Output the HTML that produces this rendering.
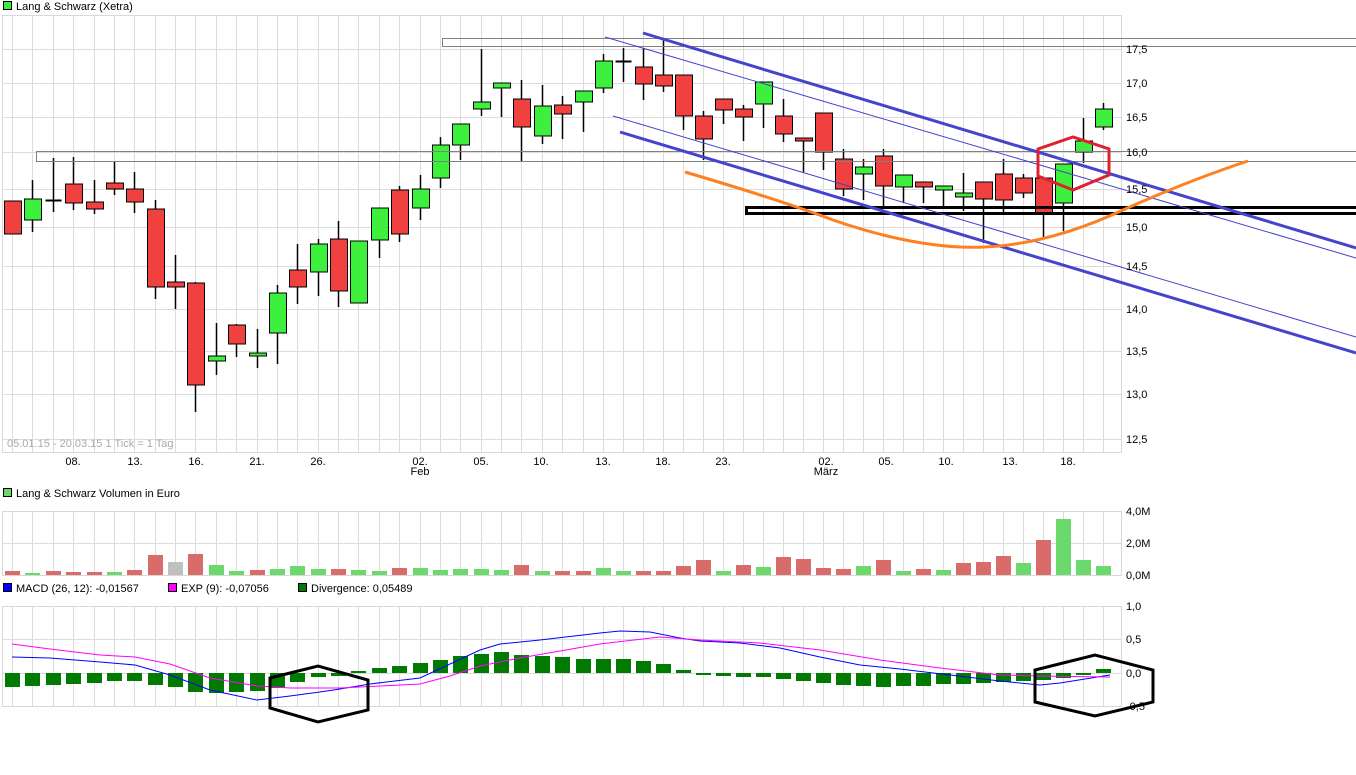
<!DOCTYPE html>
<html><head><meta charset="utf-8"><style>
html,body{margin:0;padding:0;background:#fff;width:1356px;height:775px;overflow:hidden}
svg{display:block}
text{font-family:"Liberation Sans",sans-serif;font-size:11px;fill:#000}
</style></head><body>
<svg id="s" width="1356" height="775" xmlns="http://www.w3.org/2000/svg">
<g id="grid"></g>
<g id="over"></g>
<g id="cand"></g>
<g id="top"></g>
<!-- headers -->
<rect x="3.5" y="1.5" width="8" height="8" fill="#3ef03e" stroke="#000"/>
<text x="16" y="10">Lang &amp; Schwarz (Xetra)</text>
<rect x="3.5" y="488.5" width="8" height="8" fill="#6bd96b" stroke="#000"/>
<text x="16" y="497">Lang &amp; Schwarz Volumen in Euro</text>
<rect x="3.5" y="583.5" width="8" height="8" fill="#0000ff" stroke="#000"/>
<text x="16" y="592">MACD (26, 12): -0,01567</text>
<rect x="168.5" y="583.5" width="8" height="8" fill="#ff00ff" stroke="#000"/>
<text x="181" y="592">EXP (9): -0,07056</text>
<rect x="298.5" y="583.5" width="8" height="8" fill="#007a00" stroke="#000"/>
<text x="311" y="592">Divergence: 0,05489</text>
<text x="7" y="447" style="fill:#aaa">05.01.15 - 20.03.15   1 Tick = 1 Tag</text>
<g id="ylab">
<text x="1126" y="53">17,5</text><text x="1126" y="87">17,0</text><text x="1126" y="121">16,5</text>
<text x="1126" y="156">16,0</text><text x="1126" y="193">15,5</text><text x="1126" y="231">15,0</text>
<text x="1126" y="270">14,5</text><text x="1126" y="313">14,0</text><text x="1126" y="355">13,5</text>
<text x="1126" y="398">13,0</text><text x="1126" y="443">12,5</text>
<text x="1126" y="515">4,0M</text><text x="1126" y="547">2,0M</text><text x="1126" y="579">0,0M</text>
<text x="1126" y="610">1,0</text><text x="1126" y="643">0,5</text><text x="1126" y="677">0,0</text><text x="1126" y="710">-0,5</text>
</g>
<g text-anchor="middle">
<text x="73" y="465">08.</text><text x="135" y="465">13.</text><text x="196" y="465">16.</text>
<text x="257" y="465">21.</text><text x="318" y="465">26.</text><text x="420" y="465">02.</text>
<text x="420" y="475">Feb</text><text x="481" y="465">05.</text><text x="541" y="465">10.</text>
<text x="603" y="465">13.</text><text x="663" y="465">18.</text><text x="723" y="465">23.</text>
<text x="826" y="465">02.</text><text x="826" y="475">März</text><text x="886" y="465">05.</text>
<text x="946" y="465">10.</text><text x="1010" y="465">13.</text><text x="1068" y="465">18.</text>
</g>
<rect x="0" y="476" width="1125" height="10" fill="#fff"/>
</svg>
<script>
var NS="http://www.w3.org/2000/svg";
function el(p,t,a){var e=document.createElementNS(NS,t);for(var k in a)e.setAttribute(k,a[k]);document.getElementById(p).appendChild(e);return e;}
function X(i){return i<=29?12+i*591/29:603+20*(i-29);}
var G="grid";
[[15,452],[511,575],[606,706]].forEach(function(r){
 el(G,"rect",{x:2.5,y:r[0]+.5,width:1119,height:r[1]-r[0],fill:"#fff",stroke:"#d8d8d8"});
 for(var i=0;i<55;i++){var x=Math.round(X(i))+.5;el(G,"line",{x1:x,y1:r[0],x2:x,y2:r[1],stroke:"#dcdcdc"});}
});
[49,83,117,152,189,227,266,309,351,394,439].forEach(function(y){el(G,"line",{x1:2,y1:y+.5,x2:1121,y2:y+.5,stroke:"#dcdcdc"});});
[543].forEach(function(y){el(G,"line",{x1:2,y1:y+.5,x2:1121,y2:y+.5,stroke:"#dcdcdc"});});
[639,673].forEach(function(y){el(G,"line",{x1:2,y1:y+.5,x2:1121,y2:y+.5,stroke:"#dcdcdc"});});
var C=[[201,234,201,234,'r'],[199,220,180,232,'g'],[200,201,158,212,'d'],[184,203,157,210,'r'],[202,209,180,214,'r'],
[183,189,161,195,'r'],[189,202,172,213,'r'],[209,287,200,299,'r'],[282,287,255,309,'r'],[283,385,282,412,'r'],
[356,361,323,375,'g'],[325,344,324,357,'r'],[353,356,329,368,'g'],[293,333,285,364,'g'],[270,287,244,304,'r'],
[244,272,239,296,'g'],[239,291,221,307,'r'],[241,303,241,303,'g'],[208,240,208,258,'g'],[190,234,186,242,'r'],
[189,208,175,220,'g'],[145,178,137,188,'g'],[124,145,124,160,'g'],[102,109,49,116,'g'],[83,88,83,117,'g'],
[99,127,80,161,'r'],[106,136,85,144,'g'],[105,114,96,139,'r'],[91,102,91,132,'g'],[61,88,54,93,'g'],
[61,62,48,82,'d'],[67,84,48,100,'r'],[75,86,40,92,'r'],[75,116,75,130,'r'],[116,139,111,160,'r'],
[99,110,99,124,'r'],[109,117,105,141,'r'],[82,104,82,128,'g'],[116,134,99,142,'r'],[138,141,138,172,'r'],
[113,152,113,170,'r'],[159,189,149,196,'r'],[167,174,159,200,'g'],[156,186,149,208,'r'],[175,187,175,203,'g'],
[182,187,182,203,'r'],[186,190,186,207,'g'],[193,197,173,211,'g'],[182,199,182,243,'r'],[174,200,159,213,'r'],
[178,193,174,198,'r'],[178,213,178,237,'r'],[164,203,164,231,'g'],[141,152,118,163,'g'],[109,127,103,130,'g']];
C.forEach(function(c,i){var x=Math.round(X(i))+.5;
 el("cand","line",{x1:x,y1:c[2],x2:x,y2:c[3],stroke:"#000","stroke-width":1.5});
 if(c[4]=='d'){el("cand","line",{x1:x-8,y1:c[0]+.5,x2:x+8,y2:c[0]+.5,stroke:"#000","stroke-width":2});}
 else el("cand","rect",{x:x-8,y:c[0],width:17,height:c[1]-c[0],fill:c[4]=='r'?"#f04040":"#3ef03e",stroke:"#000","stroke-width":1});
});
var V=[[571,'r'],[573,'g'],[571,'r'],[572,'r'],[572,'r'],[572,'g'],[570,'r'],[555,'r'],[562,'x'],[554,'r'],
[565,'g'],[571,'g'],[570,'r'],[569,'g'],[566,'g'],[569,'g'],[569,'r'],[570,'g'],[571,'g'],[568,'r'],
[568,'g'],[570,'g'],[569,'g'],[569,'g'],[570,'g'],[565,'r'],[571,'g'],[571,'r'],[571,'r'],[568,'g'],
[571,'g'],[571,'r'],[571,'r'],[566,'r'],[560,'r'],[571,'g'],[565,'r'],[567,'g'],[557,'r'],[559,'r'],
[568,'r'],[569,'r'],[566,'g'],[560,'r'],[571,'g'],[569,'r'],[570,'g'],[563,'r'],[562,'r'],[556,'r'],
[563,'g'],[540,'r'],[519,'g'],[560,'g'],[566,'g']];
V.forEach(function(v,i){var x=Math.round(X(i));el("cand","rect",{x:x-7,y:v[0],width:15,height:575-v[0],fill:v[1]=='r'?"#d96b6b":v[1]=='g'?"#6bd96b":"#c0c0c0"});});
var D=[687,686,685,684,683,681,681,685,687,692,693,692,691,688,682,677,676,671,668,666,663,660,656,654,652,655,656,657,659,659,659,661,664,670,675,676,677,677,679,681,683,685,686,687,686,686,684,684,683,682,681,680,678,675,669];
D.forEach(function(d,i){var x=Math.round(X(i));var y1=Math.min(d,673),y2=Math.max(d,673);el("cand","rect",{x:x-7,y:y1,width:15,height:Math.max(y2-y1,2),fill:"#007a00"});});
el("cand","polyline",{points:"12,657 50,658 100,662 135,665 170,675 210,690 257,700 290,696 320,692 340,689 370,684 420,678 450,664 480,650 500,644 540,640 600,633 620,631 650,632 680,638 700,641 740,643 780,648 820,657 860,665 900,669 950,675 1000,681 1040,685 1060,683 1110,675",fill:"none",stroke:"#0000ff"});
el("cand","polyline",{points:"12,644 50,649 100,655 135,657 170,664 210,678 257,686 290,688 340,688 380,686 420,684 450,676 480,666 520,658 600,644 660,637 700,640 760,643 820,650 880,660 940,668 1000,675 1040,676 1110,677",fill:"none",stroke:"#ff00ff"});
var T="top";
el(T,"rect",{x:442.5,y:38.5,width:1000,height:8,fill:"none",stroke:"#808080"});
el(T,"rect",{x:36.5,y:151.5,width:1400,height:10,fill:"none",stroke:"#808080"});
el(T,"rect",{x:746.5,y:207.5,width:700,height:6,fill:"none",stroke:"#000","stroke-width":3});
el(T,"line",{x1:605,y1:37,x2:1356,y2:258,stroke:"#4444cc","stroke-width":1});
el(T,"line",{x1:613,y1:116,x2:1356,y2:337,stroke:"#4444cc","stroke-width":1});
el(T,"line",{x1:643,y1:33,x2:1356,y2:248,stroke:"#4444cc","stroke-width":3});
el(T,"line",{x1:620,y1:132,x2:1356,y2:353,stroke:"#4444cc","stroke-width":3});
el(T,"path",{d:"M685,172 Q780,200 833,220 Q920,250 985,247 Q1050,244 1123,210 Q1190,180 1248,161",fill:"none",stroke:"#ff8020","stroke-width":3});
el(T,"polygon",{points:"1038,149 1073,137 1109,149 1109,175 1073,190 1038,176",fill:"none",stroke:"#e02030","stroke-width":3});
el(T,"polygon",{points:"270,678 318,666 368,680 368,710 318,722 270,708",fill:"none",stroke:"#000","stroke-width":3});
el(T,"polygon",{points:"1035,670 1095,655 1153,670 1153,702 1095,716 1035,702",fill:"none",stroke:"#000","stroke-width":3});
</script>
</body></html>
